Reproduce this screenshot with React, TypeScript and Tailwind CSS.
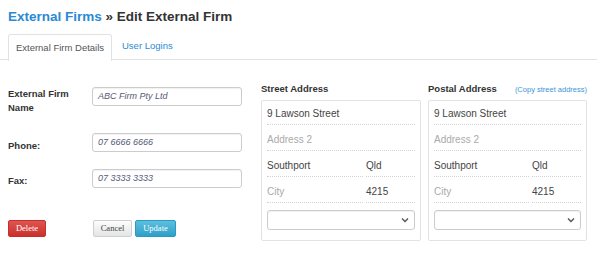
import React from 'react'

function AddressField({ value, placeholder, className = '' }: { value?: string; placeholder?: string; className?: string }) {
    return (
        <div className={`h-[26px] flex items-end pb-[4px] leading-[12px] border-b border-dotted border-[#d3d3d3] text-[10px] ${className}`}>
            {value ? <span className="text-[#444]">{value}</span> : <span className="text-[#aaa]">{placeholder}</span>}
        </div>
    )
}

function AddressBox() {
    return (
        <div className="border border-[#e3e3e3] rounded-[2px] px-[5px] pb-[10px] w-full">
            <div className="-mt-[2px]">
                <AddressField value="9 Lawson Street" />
            </div>
            <AddressField placeholder="Address 2" />
            <div className="flex gap-[3px]">
                <AddressField value="Southport" className="flex-1" />
                <AddressField value="Qld" className="w-[49px]" />
            </div>
            <div className="flex gap-[3px]">
                <AddressField placeholder="City" className="flex-1" />
                <AddressField value="4215" className="w-[49px]" />
            </div>
            <div className="mt-[7px] h-[20px] border border-[#cccccc] rounded-[3px] flex items-center justify-end pr-[5px] bg-white shadow-[inset_0_1px_1px_rgba(0,0,0,0.06)]">
                <svg width="8" height="6" viewBox="0 0 8 6">
                    <path d="M1 1.5 L4 4.5 L7 1.5" stroke="#555" strokeWidth="1.4" fill="none" />
                </svg>
            </div>
        </div>
    )
}

function TextInput({ value }: { value: string }) {
    return (
        <div className="w-[150px] h-[19px] border border-[#cccccc] rounded-[3px] flex items-center px-[5px] italic text-[9px] text-[#565a78] shadow-[inset_0_1px_1px_rgba(0,0,0,0.06)]">
            {value}
        </div>
    )
}

export default function App() {
    return (
        <div className="w-[597px] h-[261px] bg-white overflow-hidden font-['Liberation_Sans',Arial,sans-serif]">
            <h1 className="pl-[8px] pt-[7px] text-[13.5px] font-bold leading-[20px] text-[#333]">
                <span className="text-[#2a8ad4]">External Firms</span> » Edit External Firm
            </h1>
            <div className="mt-[7px] flex border-b border-[#e2e2e2] pl-[8px] h-[26px]">
                <div className="w-[104px] h-[27px] border border-b-0 border-[#e2e2e2] rounded-t-[3px] bg-white flex items-center justify-center text-[9.5px] text-[#555]">
                    External Firm Details
                </div>
                <div className="pl-[10px] flex items-center text-[9.5px] text-[#2a8ad4]">
                    User Logins
                </div>
            </div>
            <div className="flex pl-[8px] pt-[27px]">
                <div className="w-[234px] flex flex-col">
                    <div className="flex items-start h-[32px]">
                        <div className="w-[84px] text-[9.5px] font-bold text-[#333] leading-[14px]">External Firm<br />Name</div>
                        <TextInput value="ABC Firm Pty Ltd" />
                    </div>
                    <div className="flex items-center mt-[13px]">
                        <div className="w-[84px] text-[9.5px] font-bold text-[#333] pt-[7px]">Phone:</div>
                        <TextInput value="07 6666 6666" />
                    </div>
                    <div className="flex items-center mt-[16px]">
                        <div className="w-[84px] text-[9.5px] font-bold text-[#333] pt-[5px]">Fax:</div>
                        <TextInput value="07 3333 3333" />
                    </div>
                    <div className="flex items-start mt-[31px]">
                        <button className="w-[38px] h-[17px] rounded-[2px] text-[8.5px] text-white bg-gradient-to-b from-[#e0544f] to-[#c9302c] border border-[#c4302c] font-['Liberation_Serif',serif]">Delete</button>
                        <button className="ml-[47px] w-[39px] h-[17px] rounded-[2px] text-[8.5px] text-[#444] bg-gradient-to-b from-[#fdfdfd] to-[#e4e4e4] border border-[#cfcfcf] font-['Liberation_Serif',serif]">Cancel</button>
                        <button className="ml-[3px] w-[41px] h-[17px] rounded-[2px] text-[8.5px] text-white bg-gradient-to-b from-[#5bc0de] to-[#2f9fc7] border border-[#2a9ac2] font-['Liberation_Serif',serif]">Update</button>
                    </div>
                </div>
                <div className="ml-[19px] w-[160px] -mt-[8px]">
                    <div className="text-[9.5px] font-bold text-[#333] h-[21px] flex items-center">Street Address</div>
                    <AddressBox />
                </div>
                <div className="ml-[7px] w-[159px] -mt-[8px]">
                    <div className="flex items-center justify-between h-[21px]">
                        <span className="text-[9.5px] font-bold text-[#333]">Postal Address</span>
                        <span className="text-[7.5px] text-[#3a95d5]">(Copy street address)</span>
                    </div>
                    <AddressBox />
                </div>
            </div>
        </div>
    )
}
